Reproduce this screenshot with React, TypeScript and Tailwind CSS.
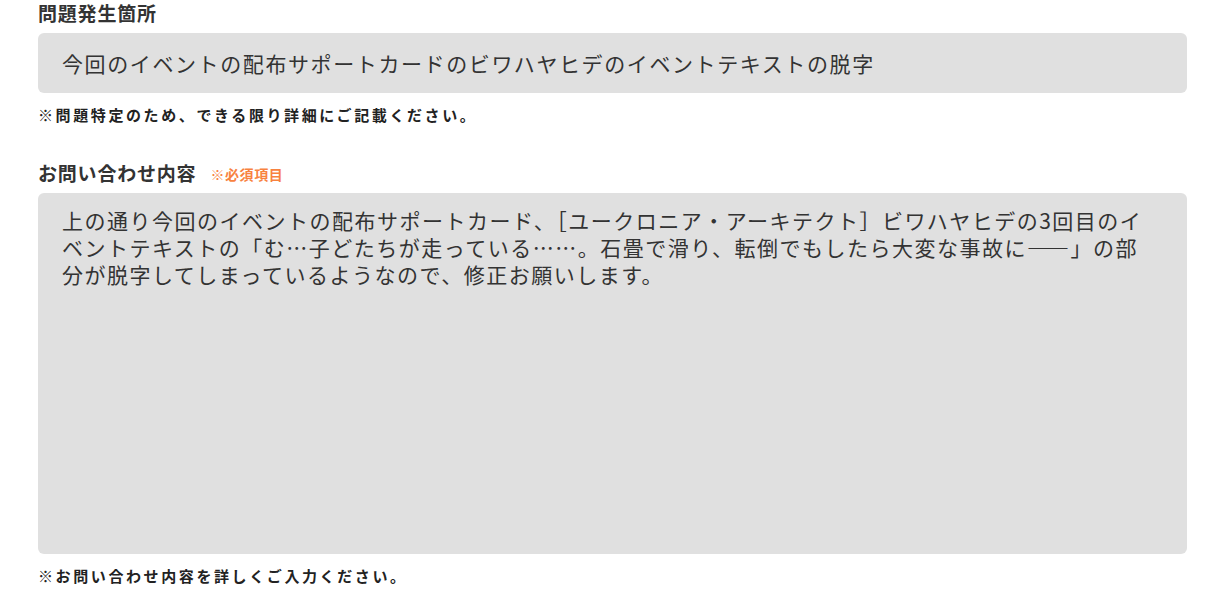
import React from "react";

const font = { fontFamily: '"Noto Sans CJK JP", "Noto Sans", sans-serif' };

const Label = ({ text, required }: { text: string; required?: boolean }) => (
  <div className="flex items-center h-[26px]">
    <span className="text-[19px] font-bold text-[#333333] tracking-[0.8px] leading-[26px]">{text}</span>
    {required && (
      <span className="ml-[14px] text-[14px] font-bold text-[#f8823f] tracking-[0.6px] mt-[3px]">
        ※必須項目
      </span>
    )}
  </div>
);

const Note = ({ text }: { text: string }) => (
  <p className="text-[15px] font-bold text-[#222222] tracking-[2.6px] leading-[20px]">{text}</p>
);

export default function App() {
  return (
    <div className="w-[1206px] h-[602px] bg-white pl-[38px] pr-[19px] overflow-hidden" style={font}>
      <Label text="問題発生箇所" />
      <div className="mt-[7px] h-[60px] rounded-[6px] bg-[#e0e0e0] flex items-center px-[24px]">
        <span className="text-[21px] text-[#333333] tracking-[1.6px] leading-[27px]">
          今回のイベントの配布サポートカードのビワハヤヒデのイベントテキストの脱字
        </span>
      </div>
      <div className="mt-[12px]">
        <Note text="※問題特定のため、できる限り詳細にご記載ください。" />
      </div>

      <div className="mt-[35px]">
        <Label text="お問い合わせ内容" required />
      </div>
      <div className="mt-[7px] h-[361px] rounded-[6px] bg-[#e0e0e0] px-[24px] pt-[14px]">
        <p className="text-[21px] text-[#333333] tracking-[1.5px] leading-[27px]">
          上の通り今回のイベントの配布サポートカード、［ユークロニア・アーキテクト］ビワハヤヒデの3回目のイ
          <br />
          ベントテキストの「む…子どたちが走っている……。石畳で滑り、転倒でもしたら大変な事故に――」の部
          <br />
          分が脱字してしまっているようなので、修正お願いします。
        </p>
      </div>
      <div className="mt-[12px]">
        <Note text="※お問い合わせ内容を詳しくご入力ください。" />
      </div>
    </div>
  );
}
